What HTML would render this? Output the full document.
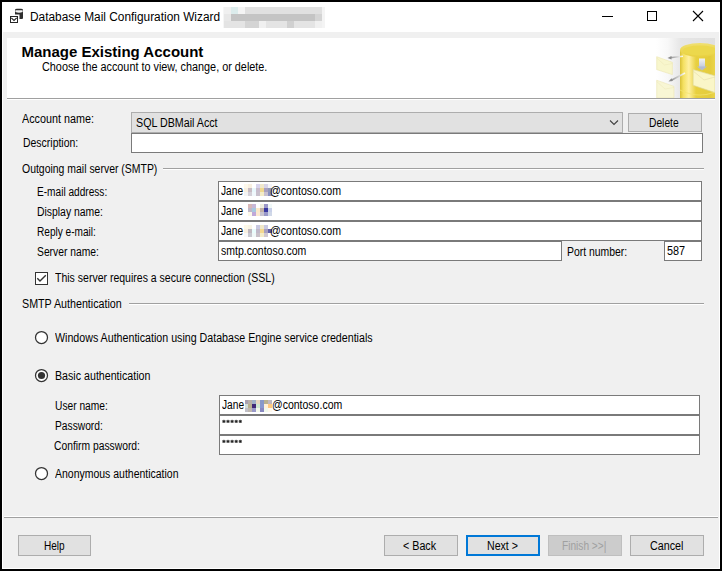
<!DOCTYPE html>
<html><head><meta charset="utf-8"><style>
html,body{margin:0;padding:0;width:722px;height:571px;overflow:hidden;background:#000}
.a{position:absolute;box-sizing:border-box}
svg.a{display:block}
.t{transform-origin:0 0;font-family:"Liberation Sans",sans-serif;white-space:pre;line-height:1}
.bm{display:inline-block;width:0;height:0;vertical-align:baseline}
</style></head><body>
<div class="a" style="left:0px;top:0px;width:722px;height:571px;background:#000;"></div>
<div class="a" style="left:2px;top:2px;width:718px;height:567px;background:#fff;"></div>
<div class="a" style="left:3px;top:32px;width:716px;height:536px;background:#f0f0f0;"></div>
<div class="a" style="left:7px;top:38px;width:708px;height:60px;background:#fff;"></div>
<div class="a" style="left:7px;top:98px;width:708px;height:1px;background:#a0a0a0;"></div>
<div class="a" style="left:7px;top:99px;width:708px;height:1px;background:#fff;"></div>
<div class="a" style="left:4px;top:516px;width:714px;height:1px;background:#fff;"></div>
<div class="a" style="left:4px;top:517px;width:714px;height:1px;background:#a0a0a0;"></div>
<div class="a" style="left:163px;top:168px;width:541px;height:1px;background:#a0a0a0;"></div>
<div class="a" style="left:163px;top:169px;width:541px;height:1px;background:#fff;"></div>
<div class="a" style="left:129px;top:303px;width:575px;height:1px;background:#a0a0a0;"></div>
<div class="a" style="left:129px;top:304px;width:575px;height:1px;background:#fff;"></div>
<div class="a" style="left:131px;top:112px;width:492px;height:21px;background:#e1e1e1;box-shadow:inset 0 0 0 1px #adadad;"></div>
<svg class="a" style="left:609px;top:119px" width="11" height="8"><polyline points="1,1.5 5,5.5 9,1.5" fill="none" stroke="#404040" stroke-width="1.1"/></svg>
<div class="a" style="left:628px;top:113px;width:74px;height:19px;background:#e1e1e1;box-shadow:inset 0 0 0 1px #adadad;"></div>
<div class="a" style="left:131px;top:133px;width:572px;height:20px;background:#fff;box-shadow:inset 0 0 0 1px #7a7a7a;"></div>
<div class="a" style="left:218px;top:181px;width:484px;height:20px;background:#fff;box-shadow:inset 0 0 0 1px #7a7a7a;"></div>
<div class="a" style="left:218px;top:201px;width:484px;height:20px;background:#fff;box-shadow:inset 0 0 0 1px #7a7a7a;"></div>
<div class="a" style="left:218px;top:221px;width:484px;height:20px;background:#fff;box-shadow:inset 0 0 0 1px #7a7a7a;"></div>
<div class="a" style="left:218px;top:241px;width:344px;height:20px;background:#fff;box-shadow:inset 0 0 0 1px #7a7a7a;"></div>
<div class="a" style="left:664px;top:241px;width:38px;height:20px;background:#fff;box-shadow:inset 0 0 0 1px #7a7a7a;"></div>
<div class="a" style="left:219px;top:395px;width:481px;height:20px;background:#fff;box-shadow:inset 0 0 0 1px #7a7a7a;"></div>
<div class="a" style="left:219px;top:415px;width:481px;height:20px;background:#fff;box-shadow:inset 0 0 0 1px #7a7a7a;"></div>
<div class="a" style="left:219px;top:435px;width:481px;height:20px;background:#fff;box-shadow:inset 0 0 0 1px #7a7a7a;"></div>
<div class="a" style="left:35px;top:272px;width:13px;height:13px;background:#fff;box-shadow:inset 0 0 0 1px #333;"></div>
<svg class="a" style="left:35px;top:272px" width="13" height="13"><polyline points="2.3,6.2 5,9 10.8,3.2" fill="none" stroke="#333" stroke-width="1.4"/></svg>
<svg class="a" style="left:34px;top:330px" width="15" height="15"><circle cx="7.5" cy="7.5" r="6" fill="#fff" stroke="#333" stroke-width="1.25"/></svg>
<svg class="a" style="left:34px;top:368px" width="15" height="15"><circle cx="7.5" cy="7.5" r="6" fill="#fff" stroke="#333" stroke-width="1.25"/><circle cx="7.5" cy="7.5" r="3.6" fill="#333"/></svg>
<svg class="a" style="left:34px;top:466px" width="15" height="15"><circle cx="7.5" cy="7.5" r="6" fill="#fff" stroke="#333" stroke-width="1.25"/></svg>
<div class="a" style="left:18px;top:535px;width:73px;height:21px;background:#e1e1e1;box-shadow:inset 0 0 0 1px #adadad;"></div>
<div class="a" style="left:384px;top:535px;width:74px;height:21px;background:#e1e1e1;box-shadow:inset 0 0 0 1px #adadad;"></div>
<div class="a" style="left:630px;top:535px;width:74px;height:21px;background:#e1e1e1;box-shadow:inset 0 0 0 1px #adadad;"></div>
<div class="a" style="left:466px;top:535px;width:74px;height:21px;background:#e1e1e1;box-shadow:inset 0 0 0 2px #0078d7;"></div>
<div class="a" style="left:548px;top:535px;width:74px;height:21px;background:#cccccc;box-shadow:inset 0 0 0 1px #bfbfbf;"></div>
<svg class="a" style="left:220px;top:418px" width="24" height="6"><path d="M2.30,3.30 L5.50,3.30 M3.90,1.80 L3.90,5.00 M2.70,4.80 L5.10,2.20 M2.70,2.20 L5.10,4.80" stroke="#1a1a1a" stroke-width="0.85"/><path d="M6.40,3.30 L9.60,3.30 M8.00,1.80 L8.00,5.00 M6.80,4.80 L9.20,2.20 M6.80,2.20 L9.20,4.80" stroke="#1a1a1a" stroke-width="0.85"/><path d="M10.50,3.30 L13.70,3.30 M12.10,1.80 L12.10,5.00 M10.90,4.80 L13.30,2.20 M10.90,2.20 L13.30,4.80" stroke="#1a1a1a" stroke-width="0.85"/><path d="M14.60,3.30 L17.80,3.30 M16.20,1.80 L16.20,5.00 M15.00,4.80 L17.40,2.20 M15.00,2.20 L17.40,4.80" stroke="#1a1a1a" stroke-width="0.85"/><path d="M18.70,3.30 L21.90,3.30 M20.30,1.80 L20.30,5.00 M19.10,4.80 L21.50,2.20 M19.10,2.20 L21.50,4.80" stroke="#1a1a1a" stroke-width="0.85"/></svg>
<svg class="a" style="left:220px;top:438px" width="24" height="6"><path d="M2.30,3.30 L5.50,3.30 M3.90,1.80 L3.90,5.00 M2.70,4.80 L5.10,2.20 M2.70,2.20 L5.10,4.80" stroke="#1a1a1a" stroke-width="0.85"/><path d="M6.40,3.30 L9.60,3.30 M8.00,1.80 L8.00,5.00 M6.80,4.80 L9.20,2.20 M6.80,2.20 L9.20,4.80" stroke="#1a1a1a" stroke-width="0.85"/><path d="M10.50,3.30 L13.70,3.30 M12.10,1.80 L12.10,5.00 M10.90,4.80 L13.30,2.20 M10.90,2.20 L13.30,4.80" stroke="#1a1a1a" stroke-width="0.85"/><path d="M14.60,3.30 L17.80,3.30 M16.20,1.80 L16.20,5.00 M15.00,4.80 L17.40,2.20 M15.00,2.20 L17.40,4.80" stroke="#1a1a1a" stroke-width="0.85"/><path d="M18.70,3.30 L21.90,3.30 M20.30,1.80 L20.30,5.00 M19.10,4.80 L21.50,2.20 M19.10,2.20 L21.50,4.80" stroke="#1a1a1a" stroke-width="0.85"/></svg>
<div class="a" style="left:602px;top:16px;width:11px;height:1px;background:#000;"></div>
<div class="a" style="left:647px;top:11px;width:10px;height:10px;box-shadow:inset 0 0 0 1px #000;"></div>
<svg class="a" style="left:692px;top:10px" width="12" height="12"><path d="M1,1 L11,11 M11,1 L1,11" stroke="#000" stroke-width="1.1"/></svg>
<svg class="a" style="left:0px;top:0px" width="30" height="30">
<path d="M15,10 Q15,8.8 17,8.8 L21,8.8 Q23,8.8 23,10 L23,18 Q23,19 22,19 L19.5,19 L19.5,14.5 L15,14.5 Z" fill="#2e2e2e"/>
<path d="M15.4,10.3 L22.6,10.3 L22.6,12 Q19,13.4 15.4,12 Z" fill="#f6f6f6"/>
<rect x="10.5" y="16.5" width="7" height="6" fill="#fff" stroke="#262626" stroke-width="1"/>
<polyline points="11.3,17.8 14,20.4 16.7,17.8" fill="none" stroke="#262626" stroke-width="1.1"/>
</svg>
<div class="a" style="left:224px;top:7px;width:7px;height:7px;background:#f0f0f0"></div><div class="a" style="left:231px;top:7px;width:7px;height:7px;background:#dcecec"></div><div class="a" style="left:238px;top:7px;width:7px;height:7px;background:#f4f4f4"></div><div class="a" style="left:245px;top:7px;width:7px;height:7px;background:#e0e0e0"></div><div class="a" style="left:252px;top:7px;width:7px;height:7px;background:#e0e0e0"></div><div class="a" style="left:259px;top:7px;width:7px;height:7px;background:#e0e0e0"></div><div class="a" style="left:266px;top:7px;width:7px;height:7px;background:#e0e0e0"></div><div class="a" style="left:273px;top:7px;width:7px;height:7px;background:#e0e0e0"></div><div class="a" style="left:280px;top:7px;width:7px;height:7px;background:#e0e0e0"></div><div class="a" style="left:287px;top:7px;width:7px;height:7px;background:#e0e0e0"></div><div class="a" style="left:294px;top:7px;width:7px;height:7px;background:#e0e0e0"></div><div class="a" style="left:301px;top:7px;width:7px;height:7px;background:#e0e0e0"></div><div class="a" style="left:308px;top:7px;width:7px;height:7px;background:#e0e0e0"></div><div class="a" style="left:315px;top:7px;width:7px;height:7px;background:#e0e0e0"></div><div class="a" style="left:224px;top:14px;width:7px;height:7px;background:#e8e8e8"></div><div class="a" style="left:231px;top:14px;width:7px;height:7px;background:#c4c4c4"></div><div class="a" style="left:238px;top:14px;width:7px;height:7px;background:#c4c4c4"></div><div class="a" style="left:245px;top:14px;width:7px;height:7px;background:#c4c4c4"></div><div class="a" style="left:252px;top:14px;width:7px;height:7px;background:#c4c4c4"></div><div class="a" style="left:259px;top:14px;width:7px;height:7px;background:#c4c4c4"></div><div class="a" style="left:266px;top:14px;width:7px;height:7px;background:#c4c4c4"></div><div class="a" style="left:273px;top:14px;width:7px;height:7px;background:#c4c4c4"></div><div class="a" style="left:280px;top:14px;width:7px;height:7px;background:#c4c4c4"></div><div class="a" style="left:287px;top:14px;width:7px;height:7px;background:#c4c4c4"></div><div class="a" style="left:294px;top:14px;width:7px;height:7px;background:#c4c4c4"></div><div class="a" style="left:301px;top:14px;width:7px;height:7px;background:#c4c4c4"></div><div class="a" style="left:308px;top:14px;width:7px;height:7px;background:#c4c4c4"></div><div class="a" style="left:315px;top:14px;width:7px;height:7px;background:#d4d4d4"></div><div class="a" style="left:224px;top:21px;width:7px;height:7px;background:#e4e4e4"></div><div class="a" style="left:231px;top:21px;width:7px;height:7px;background:#e4e4e4"></div><div class="a" style="left:238px;top:21px;width:7px;height:7px;background:#e4e4e4"></div><div class="a" style="left:245px;top:21px;width:7px;height:7px;background:#d4d4d4"></div><div class="a" style="left:252px;top:21px;width:7px;height:7px;background:#d4d4d4"></div><div class="a" style="left:259px;top:21px;width:7px;height:7px;background:#f0f0f0"></div><div class="a" style="left:266px;top:21px;width:7px;height:7px;background:#e4e4e4"></div><div class="a" style="left:273px;top:21px;width:7px;height:7px;background:#e4e4e4"></div><div class="a" style="left:280px;top:21px;width:7px;height:7px;background:#e4e4e4"></div><div class="a" style="left:287px;top:21px;width:7px;height:7px;background:#d0d0d0"></div><div class="a" style="left:294px;top:21px;width:7px;height:7px;background:#e4e4e4"></div><div class="a" style="left:301px;top:21px;width:7px;height:7px;background:#e4e4e4"></div><div class="a" style="left:308px;top:21px;width:7px;height:7px;background:#e4e4e4"></div><div class="a" style="left:315px;top:21px;width:7px;height:7px;background:#f0f0f0"></div><div class="a" style="left:322px;top:7px;width:3px;height:21px;background:#f4f4f4"></div><div class="a" style="left:223px;top:7px;width:1px;height:21px;background:#f6f6f6"></div>
<div class="a" style="left:244px;top:184px;width:4px;height:4px;background:#fdf8ec"></div><div class="a" style="left:248px;top:184px;width:4px;height:4px;background:#f8f0e0"></div><div class="a" style="left:252px;top:184px;width:4px;height:4px;background:#fff"></div><div class="a" style="left:256px;top:184px;width:4px;height:4px;background:#d8d4ec"></div><div class="a" style="left:260px;top:184px;width:4px;height:4px;background:#f0e8cc"></div><div class="a" style="left:264px;top:184px;width:4px;height:4px;background:#d8d4e8"></div><div class="a" style="left:268px;top:184px;width:4px;height:4px;background:#f4f4f8"></div><div class="a" style="left:244px;top:188px;width:4px;height:4px;background:#f8f0e0"></div><div class="a" style="left:248px;top:188px;width:4px;height:4px;background:#c8bcc4"></div><div class="a" style="left:252px;top:188px;width:4px;height:4px;background:#e8f8fc"></div><div class="a" style="left:256px;top:188px;width:4px;height:4px;background:#c8bccc"></div><div class="a" style="left:260px;top:188px;width:4px;height:4px;background:#f0d890"></div><div class="a" style="left:264px;top:188px;width:4px;height:4px;background:#a8a0c0"></div><div class="a" style="left:268px;top:188px;width:4px;height:4px;background:#9098b8"></div><div class="a" style="left:244px;top:192px;width:4px;height:4px;background:#f4f4f4"></div><div class="a" style="left:248px;top:192px;width:4px;height:4px;background:#d4d0d8"></div><div class="a" style="left:252px;top:192px;width:4px;height:4px;background:#f0f8fc"></div><div class="a" style="left:256px;top:192px;width:4px;height:4px;background:#c8c0cc"></div><div class="a" style="left:260px;top:192px;width:4px;height:4px;background:#f4ecc8"></div><div class="a" style="left:264px;top:192px;width:4px;height:4px;background:#c8c0d0"></div><div class="a" style="left:268px;top:192px;width:4px;height:4px;background:#8890c0"></div>
<div class="a" style="left:248px;top:204px;width:4px;height:4px;background:#d8b8b8"></div><div class="a" style="left:252px;top:204px;width:4px;height:4px;background:#c8b8d8"></div><div class="a" style="left:256px;top:204px;width:4px;height:4px;background:#fff"></div><div class="a" style="left:260px;top:204px;width:4px;height:4px;background:#f0f0e0"></div><div class="a" style="left:264px;top:204px;width:4px;height:4px;background:#9c98c8"></div><div class="a" style="left:268px;top:204px;width:4px;height:4px;background:#f0f8f8"></div><div class="a" style="left:248px;top:208px;width:4px;height:4px;background:#c0b8c8"></div><div class="a" style="left:252px;top:208px;width:4px;height:4px;background:#a8c8e0"></div><div class="a" style="left:256px;top:208px;width:4px;height:4px;background:#fce8c8"></div><div class="a" style="left:260px;top:208px;width:4px;height:4px;background:#c0b0a8"></div><div class="a" style="left:264px;top:208px;width:4px;height:4px;background:#3838a0"></div><div class="a" style="left:268px;top:208px;width:4px;height:4px;background:#c8d0e8"></div><div class="a" style="left:248px;top:212px;width:4px;height:4px;background:#fcf8e8"></div><div class="a" style="left:252px;top:212px;width:4px;height:4px;background:#c0a8d8"></div><div class="a" style="left:256px;top:212px;width:4px;height:4px;background:#fce8d0"></div><div class="a" style="left:260px;top:212px;width:4px;height:4px;background:#c8c4d0"></div><div class="a" style="left:264px;top:212px;width:4px;height:4px;background:#9898c8"></div><div class="a" style="left:268px;top:212px;width:4px;height:4px;background:#d0d8e8"></div>
<div class="a" style="left:244px;top:225px;width:4px;height:4px;background:#fcf8e8"></div><div class="a" style="left:248px;top:225px;width:4px;height:4px;background:#f8f4e4"></div><div class="a" style="left:252px;top:225px;width:4px;height:4px;background:#fff"></div><div class="a" style="left:256px;top:225px;width:4px;height:4px;background:#c8c8e0"></div><div class="a" style="left:260px;top:225px;width:4px;height:4px;background:#f0e8c8"></div><div class="a" style="left:264px;top:225px;width:4px;height:4px;background:#c8c8e0"></div><div class="a" style="left:244px;top:229px;width:4px;height:4px;background:#f8f0e0"></div><div class="a" style="left:248px;top:229px;width:4px;height:4px;background:#c0b8c0"></div><div class="a" style="left:252px;top:229px;width:4px;height:4px;background:#e8fcfc"></div><div class="a" style="left:256px;top:229px;width:4px;height:4px;background:#c0b8c8"></div><div class="a" style="left:260px;top:229px;width:4px;height:4px;background:#f4d890"></div><div class="a" style="left:264px;top:229px;width:4px;height:4px;background:#a8a0c0"></div><div class="a" style="left:268px;top:229px;width:4px;height:4px;background:#6060a8"></div><div class="a" style="left:244px;top:233px;width:4px;height:4px;background:#f8f8f8"></div><div class="a" style="left:248px;top:233px;width:4px;height:4px;background:#c8c8d0"></div><div class="a" style="left:252px;top:233px;width:4px;height:4px;background:#f0f8f8"></div><div class="a" style="left:256px;top:233px;width:4px;height:4px;background:#c8c0c8"></div><div class="a" style="left:260px;top:233px;width:4px;height:4px;background:#f4ecc8"></div><div class="a" style="left:264px;top:233px;width:4px;height:4px;background:#d0c8d0"></div>
<div class="a" style="left:245px;top:400px;width:3px;height:4px;background:#a8a0b0"></div><div class="a" style="left:245px;top:404px;width:3px;height:4px;background:#d0dcd8"></div><div class="a" style="left:245px;top:408px;width:3px;height:4px;background:#c0c0c8"></div>
<div class="a" style="left:248px;top:400px;width:4px;height:4px;background:#b8b0a8"></div><div class="a" style="left:252px;top:400px;width:4px;height:4px;background:#a0b0c8"></div><div class="a" style="left:256px;top:400px;width:4px;height:4px;background:#e8d8c0"></div><div class="a" style="left:260px;top:400px;width:4px;height:4px;background:#8898c8"></div><div class="a" style="left:264px;top:400px;width:4px;height:4px;background:#b8b090"></div><div class="a" style="left:268px;top:400px;width:4px;height:4px;background:#c0b8c0"></div><div class="a" style="left:248px;top:404px;width:4px;height:4px;background:#b8b090"></div><div class="a" style="left:252px;top:404px;width:4px;height:4px;background:#402878"></div><div class="a" style="left:256px;top:404px;width:4px;height:4px;background:#d0e8d0"></div><div class="a" style="left:260px;top:404px;width:4px;height:4px;background:#8898d0"></div><div class="a" style="left:264px;top:404px;width:4px;height:4px;background:#fff0d8"></div><div class="a" style="left:268px;top:404px;width:4px;height:4px;background:#ffc880"></div><div class="a" style="left:248px;top:408px;width:4px;height:4px;background:#c0b8b0"></div><div class="a" style="left:252px;top:408px;width:4px;height:4px;background:#9898c8"></div><div class="a" style="left:256px;top:408px;width:4px;height:4px;background:#f4f8ec"></div><div class="a" style="left:260px;top:408px;width:4px;height:4px;background:#8888c0"></div><div class="a" style="left:264px;top:408px;width:4px;height:4px;background:#f0f8ec"></div><div class="a" style="left:268px;top:408px;width:4px;height:4px;background:#fff8ec"></div>
<svg class="a" style="left:656px;top:38px" width="59" height="60" viewBox="0 0 59 60">
<defs>
<linearGradient id="bg" x1="0" x2="1" y1="0" y2="0"><stop offset="0" stop-color="#fff"/><stop offset="0.2" stop-color="#f8f8f8"/><stop offset="0.42" stop-color="#e6e6e6"/><stop offset="1" stop-color="#e0e0e0"/></linearGradient>
<linearGradient id="cyl" x1="0" x2="1" y1="0" y2="0"><stop offset="0" stop-color="#d8c038"/><stop offset="0.08" stop-color="#f4e060"/><stop offset="0.22" stop-color="#fff0a0"/><stop offset="0.4" stop-color="#e8d040"/><stop offset="0.75" stop-color="#e4cc3c"/><stop offset="1" stop-color="#f0dc58"/></linearGradient>
<linearGradient id="top" x1="0" x2="0" y1="0" y2="1"><stop offset="0" stop-color="#f0e070"/><stop offset="1" stop-color="#e8d040"/></linearGradient>
<linearGradient id="ar1" x1="1" x2="0" y1="0" y2="0"><stop offset="0" stop-color="#fff" stop-opacity="0.9"/><stop offset="1" stop-color="#909090"/></linearGradient>
<linearGradient id="ar2" x1="0" x2="0" y1="0" y2="1"><stop offset="0" stop-color="#f4f4f0"/><stop offset="1" stop-color="#c0c8dc"/></linearGradient>
</defs>
<rect x="0" y="0" width="59" height="60" fill="url(#bg)"/>
<path d="M24,12 L24,60 L64,60 L64,12 Z" fill="url(#cyl)"/>
<ellipse cx="44" cy="12" rx="20" ry="7" fill="url(#top)"/>
<ellipse cx="44" cy="12.5" rx="17" ry="5" fill="#ecd84c"/>
<path d="M24,52 Q44,62 64,52" fill="none" stroke="#f4e470" stroke-width="1.2" opacity="0.7"/>
<path d="M0.7,18.7 L16.4,24.3 L16.4,36.6 L0.7,31.6 Z" fill="#f8f6cc" stroke="#ece6b0" stroke-width="0.6"/>
<path d="M0.7,20 L8.5,27 L16.4,25.5" fill="none" stroke="#ece6b8" stroke-width="0.5"/>
<path d="M0.7,42.2 L18,48.4 L18,60 L0.7,60 Z" fill="#f8f6d4" stroke="#ece6b4" stroke-width="0.6"/>
<path d="M0.7,43.5 L9,51 L18,49.5" fill="none" stroke="#ece6b8" stroke-width="0.5"/>
<path d="M37.1,31.6 L59,37.8 L59,54.6 L37.1,47.3 Z" fill="#faf6c8" stroke="#e0d898" stroke-width="0.7"/>
<path d="M37.1,33 L48,42 L59,39" fill="none" stroke="#e4dca8" stroke-width="0.6"/>
<path d="M27,18.2 L14,19.8" stroke="url(#ar1)" stroke-width="1.6"/>
<path d="M11.5,20 L15.5,18 L15.5,21.5 Z" fill="#8c8c8c"/>
<path d="M29,35 L15,42.5" stroke="url(#ar1)" stroke-width="1.6"/>
<path d="M12.5,43.6 L15.5,40.2 L16.8,43 Z" fill="#8c8c8c"/>
<rect x="43" y="20.5" width="6" height="9" fill="url(#ar2)"/>
<path d="M41,28.5 L46,32.5 L51,28.5 Z" fill="#b4bcd0"/>
</svg>
<div id="t_title" class="a t" style="left:29.80px;top:11.00px;font-size:12px;font-weight:400;color:#000;letter-spacing:0.000px;transform:scaleX(0.9897);">Database Mail Configuration Wizard<span class="bm"></span></div>
<div id="t_h1" class="a t" style="left:21.40px;top:44.00px;font-size:15px;font-weight:700;color:#000;letter-spacing:-0.000px;">Manage Existing Account<span class="bm"></span></div>
<div id="t_h2" class="a t" style="left:41.60px;top:61.00px;font-size:12px;font-weight:400;color:#000;letter-spacing:0.000px;transform:scaleX(0.9033);">Choose the account to view, change, or delete.<span class="bm"></span></div>
<div id="t_acc" class="a t" style="left:22.00px;top:113.00px;font-size:12px;font-weight:400;color:#000;letter-spacing:0.000px;transform:scaleX(0.8989);">Account name:<span class="bm"></span></div>
<div id="t_sql" class="a t" style="left:135.50px;top:117.00px;font-size:12px;font-weight:400;color:#000;letter-spacing:0.000px;transform:scaleX(0.8905);">SQL DBMail Acct<span class="bm"></span></div>
<div id="t_del" class="a t" style="left:649.40px;top:117.00px;font-size:12px;font-weight:400;color:#000;letter-spacing:0.000px;transform:scaleX(0.8547);">Delete<span class="bm"></span></div>
<div id="t_desc" class="a t" style="left:22.50px;top:137.00px;font-size:12px;font-weight:400;color:#000;letter-spacing:0.000px;transform:scaleX(0.8714);">Description:<span class="bm"></span></div>
<div id="t_out" class="a t" style="left:22.00px;top:163.00px;font-size:12px;font-weight:400;color:#000;letter-spacing:0.000px;transform:scaleX(0.8710);">Outgoing mail server (SMTP)<span class="bm"></span></div>
<div id="t_email" class="a t" style="left:37.40px;top:186.00px;font-size:12px;font-weight:400;color:#000;letter-spacing:0.000px;transform:scaleX(0.8420);">E-mail address:<span class="bm"></span></div>
<div id="t_disp" class="a t" style="left:37.40px;top:206.00px;font-size:12px;font-weight:400;color:#000;letter-spacing:0.000px;transform:scaleX(0.8670);">Display name:<span class="bm"></span></div>
<div id="t_reply" class="a t" style="left:37.40px;top:226.00px;font-size:12px;font-weight:400;color:#000;letter-spacing:0.000px;transform:scaleX(0.8410);">Reply e-mail:<span class="bm"></span></div>
<div id="t_server" class="a t" style="left:37.40px;top:246.00px;font-size:12px;font-weight:400;color:#000;letter-spacing:0.000px;transform:scaleX(0.8598);">Server name:<span class="bm"></span></div>
<div id="v_email1" class="a t" style="left:221.00px;top:185.00px;font-size:12px;font-weight:400;color:#000;letter-spacing:0.000px;transform:scaleX(0.8476);">Jane<span class="bm"></span></div>
<div id="v_email2" class="a t" style="left:270.30px;top:185.00px;font-size:12px;font-weight:400;color:#000;letter-spacing:0.000px;transform:scaleX(0.8866);">@contoso.com<span class="bm"></span></div>
<div id="v_disp1" class="a t" style="left:221.00px;top:205.00px;font-size:12px;font-weight:400;color:#000;letter-spacing:0.000px;transform:scaleX(0.8476);">Jane<span class="bm"></span></div>
<div id="v_reply1" class="a t" style="left:221.00px;top:225.00px;font-size:12px;font-weight:400;color:#000;letter-spacing:0.000px;transform:scaleX(0.8476);">Jane<span class="bm"></span></div>
<div id="v_reply2" class="a t" style="left:270.30px;top:225.00px;font-size:12px;font-weight:400;color:#000;letter-spacing:0.000px;transform:scaleX(0.8866);">@contoso.com<span class="bm"></span></div>
<div id="v_server" class="a t" style="left:221.00px;top:245.00px;font-size:12px;font-weight:400;color:#000;letter-spacing:0.000px;transform:scaleX(0.8764);">smtp.contoso.com<span class="bm"></span></div>
<div id="t_port" class="a t" style="left:567.20px;top:246.00px;font-size:12px;font-weight:400;color:#000;letter-spacing:0.000px;transform:scaleX(0.8679);">Port number:<span class="bm"></span></div>
<div id="v_port" class="a t" style="left:667.40px;top:245.00px;font-size:12px;font-weight:400;color:#000;letter-spacing:0.000px;transform:scaleX(0.9041);">587<span class="bm"></span></div>
<div id="t_ssl" class="a t" style="left:55.00px;top:272.00px;font-size:12px;font-weight:400;color:#000;letter-spacing:0.000px;transform:scaleX(0.8760);">This server requires a secure connection (SSL)<span class="bm"></span></div>
<div id="t_smtpauth" class="a t" style="left:22.20px;top:298.00px;font-size:12px;font-weight:400;color:#000;letter-spacing:0.000px;transform:scaleX(0.8921);">SMTP Authentication<span class="bm"></span></div>
<div id="t_win" class="a t" style="left:54.50px;top:332.00px;font-size:12px;font-weight:400;color:#000;letter-spacing:0.000px;transform:scaleX(0.8883);">Windows Authentication using Database Engine service credentials<span class="bm"></span></div>
<div id="t_basic" class="a t" style="left:54.50px;top:370.00px;font-size:12px;font-weight:400;color:#000;letter-spacing:0.000px;transform:scaleX(0.8881);">Basic authentication<span class="bm"></span></div>
<div id="t_user" class="a t" style="left:54.90px;top:400.00px;font-size:12px;font-weight:400;color:#000;letter-spacing:0.000px;transform:scaleX(0.8513);">User name:<span class="bm"></span></div>
<div id="t_pass" class="a t" style="left:54.90px;top:420.00px;font-size:12px;font-weight:400;color:#000;letter-spacing:0.000px;transform:scaleX(0.8531);">Password:<span class="bm"></span></div>
<div id="t_conf" class="a t" style="left:53.70px;top:440.00px;font-size:12px;font-weight:400;color:#000;letter-spacing:0.000px;transform:scaleX(0.8590);">Confirm password:<span class="bm"></span></div>
<div id="v_user1" class="a t" style="left:222.00px;top:399.00px;font-size:12px;font-weight:400;color:#000;letter-spacing:0.000px;transform:scaleX(0.8479);">Jane<span class="bm"></span></div>
<div id="v_user2" class="a t" style="left:271.70px;top:399.00px;font-size:12px;font-weight:400;color:#000;letter-spacing:0.000px;transform:scaleX(0.8755);">@contoso.com<span class="bm"></span></div>
<div id="t_anon" class="a t" style="left:54.50px;top:468.00px;font-size:12px;font-weight:400;color:#000;letter-spacing:0.000px;transform:scaleX(0.8733);">Anonymous authentication<span class="bm"></span></div>
<div id="b_help" class="a t" style="left:43.60px;top:540.00px;font-size:12px;font-weight:400;color:#000;letter-spacing:0.000px;transform:scaleX(0.8357);">Help<span class="bm"></span></div>
<div id="b_back" class="a t" style="left:403.00px;top:540.00px;font-size:12px;font-weight:400;color:#000;letter-spacing:0.000px;transform:scaleX(0.8943);">&lt; Back<span class="bm"></span></div>
<div id="b_next" class="a t" style="left:487.10px;top:540.00px;font-size:12px;font-weight:400;color:#000;letter-spacing:0.000px;transform:scaleX(0.8844);">Next &gt;<span class="bm"></span></div>
<div id="b_finish" class="a t" style="left:562.40px;top:540.00px;font-size:12px;font-weight:400;color:#a0a0a0;letter-spacing:0.000px;transform:scaleX(0.8444);">Finish &gt;&gt;|<span class="bm"></span></div>
<div id="b_cancel" class="a t" style="left:649.50px;top:540.00px;font-size:12px;font-weight:400;color:#000;letter-spacing:0.000px;transform:scaleX(0.8927);">Cancel<span class="bm"></span></div>
</body></html>
